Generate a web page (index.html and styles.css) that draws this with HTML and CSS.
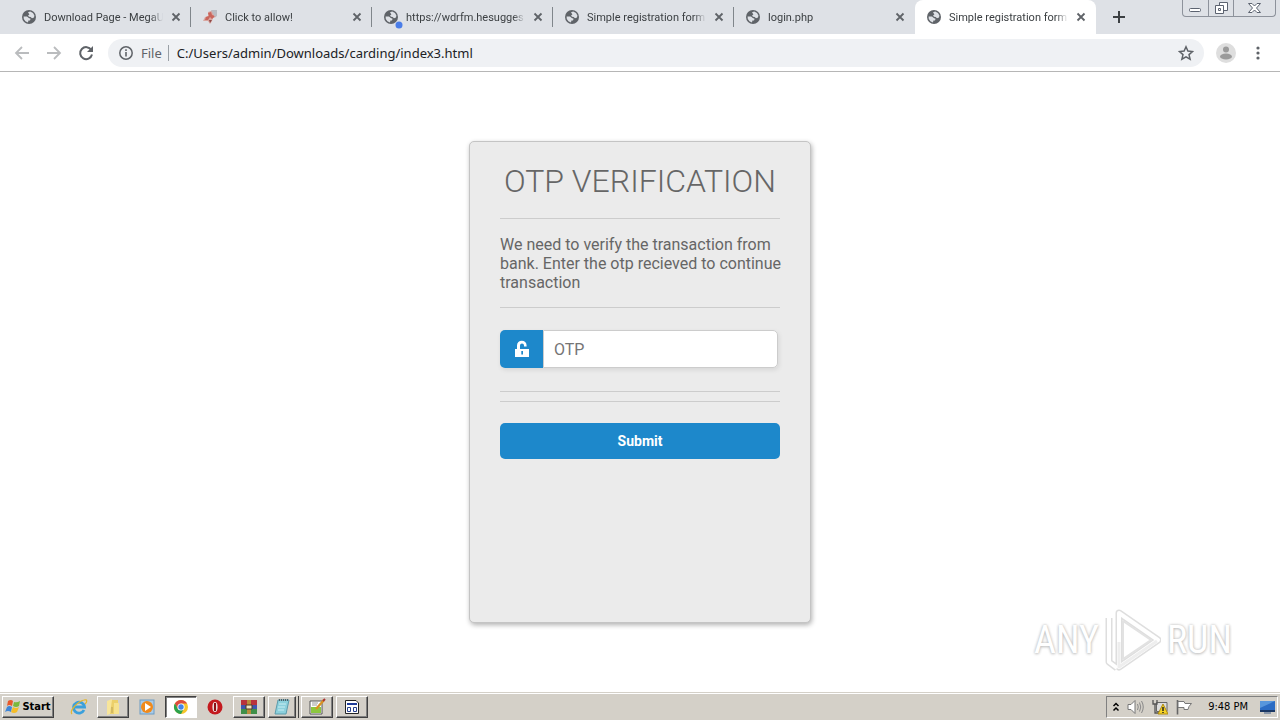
FILE: index.html
```html
<!DOCTYPE html>
<html lang="en">
<head>
    <meta charset="UTF-8">
    <meta name="viewport" content="width=device-width, initial-scale=1.0">
    <title>Simple registration form</title>
    <link rel="stylesheet" href="styles.css">
</head>
<body>

<!-- shared icons -->
<svg class="defs" aria-hidden="true">
    <symbol id="globe" viewBox="0 0 14 14">
        <circle cx="7" cy="7" r="7" fill="#5f6368"/>
        <path d="M6 2.200 8.200 1.600 11 3 12.400 5.600 12 7.600 10 8.200 8.600 7 7 6.800 6 5.400 7.400 4.600z" fill="#dee1e6"/>
        <path d="M1.600 6.400 5 6.600 6.800 8 8.600 8.800 8 10.400 6.400 10.600 6 12.400 3.400 11.200 1.800 9z" fill="#dee1e6"/>
    </symbol>
    <symbol id="cross" viewBox="0 0 10 10">
        <path d="M1.500 1.500 8.500 8.500M8.500 1.500 1.500 8.500" stroke="#5f6368" stroke-width="1.800"/>
    </symbol>
</svg>

<div class="tabs">
    <div class="tab">
        <svg class="favicon"><use href="#globe"/></svg>
        <span class="title">Download Page - MegaU</span>
        <button class="close" aria-label="Close tab"><svg><use href="#cross"/></svg></button>
    </div>
    <div class="tab">
        <svg class="favicon" viewBox="0 0 14 14">
            <path d="M5 2 11 0 14 1 13 7 10 8 9 11 7 14 5 11 0 11 2 7 5 6z" fill="#d9a6a0"/>
            <path d="M5 3 8 2 9 5 12 6 9 9 7 7 5 10 2 10 3 7 6 6z" fill="#c9655c"/>
            <path d="M8 0 14 0 14 6 12 7 10 4z" fill="#b9bcc3"/>
            <path d="M6 10 9 10 7 13z" fill="#8f4a48"/>
        </svg>
        <span class="title">Click to allow!</span>
        <button class="close" aria-label="Close tab"><svg><use href="#cross"/></svg></button>
    </div>
    <div class="tab">
        <svg class="favicon"><use href="#globe"/><circle cx="15" cy="15" r="3.500" fill="#4a7de8"/></svg>
        <span class="title">https://wdrfm.hesugges</span>
        <button class="close" aria-label="Close tab"><svg><use href="#cross"/></svg></button>
    </div>
    <div class="tab">
        <svg class="favicon"><use href="#globe"/></svg>
        <span class="title">Simple registration form</span>
        <button class="close" aria-label="Close tab"><svg><use href="#cross"/></svg></button>
    </div>
    <div class="tab last">
        <svg class="favicon"><use href="#globe"/></svg>
        <span class="title">login.php</span>
        <button class="close" aria-label="Close tab"><svg><use href="#cross"/></svg></button>
    </div>
    <div class="tab active">
        <svg class="favicon"><use href="#globe"/></svg>
        <span class="title">Simple registration form</span>
        <button class="close" aria-label="Close tab"><svg><use href="#cross"/></svg></button>
    </div>
    <button class="new-tab" aria-label="New tab">
        <svg width="12" height="12" viewBox="0 0 12 12"><path d="M6 0V12M0 6H12" stroke="#3c4043" stroke-width="2"/></svg>
    </button>
    <div class="window-buttons">
        <button aria-label="Minimize"><svg width="13" height="16" viewBox="0 0 13 16"><rect x=".5" y="8.500" width="11" height="3" rx="1" fill="#fff" stroke="#5c6370"/></svg></button>
        <button aria-label="Restore"><svg width="13" height="16" viewBox="0 0 13 16"><path d="M4.500 2.500H12.500V10.500H4.500z" fill="#fff" stroke="#5c6370"/><path d="M.5 5.500H8.500V13.500H.5z" fill="#fff" stroke="#5c6370"/><path d="M3.500 8.500H5.500V10.500H3.500z" fill="none" stroke="#5c6370"/></svg></button>
        <button class="wide" aria-label="Close"><svg width="13" height="16" viewBox="0 0 13 16"><path d="M.5 3.500H4L6.500 6 9 3.500H12.500L8.500 8 12.500 12.500H9L6.500 10 4 12.500H.5L4.500 8z" fill="#fff" stroke="#5c6370"/></svg></button>
    </div>
</div>

<div class="toolbar">
    <button aria-label="Back"><svg width="16" height="16" viewBox="0 0 16 16"><path d="M15 8H2M8 2 2 8 8 14" fill="none" stroke="#babcbe" stroke-width="1.800"/></svg></button>
    <button aria-label="Forward"><svg width="16" height="16" viewBox="0 0 16 16"><path d="M1 8H14M8 2 14 8 8 14" fill="none" stroke="#babcbe" stroke-width="1.800"/></svg></button>
    <button aria-label="Reload"><svg width="16" height="16" viewBox="0 0 16 16"><path d="M13.300 5A6 6 0 1 0 14 9.500" fill="none" stroke="#5f6368" stroke-width="2"/><path d="M15 1V7H9z" fill="#5f6368"/></svg></button>
    <div class="address">
        <svg width="14" height="14" viewBox="0 0 14 14"><circle cx="7" cy="7" r="6.200" fill="none" stroke="#5f6368" stroke-width="1.500"/><path d="M7 6V10.500M7 3.300V4.900" stroke="#5f6368" stroke-width="1.600"/></svg>
        <label for="url">File</label>
        <input type="text" id="url" value="C:/Users/admin/Downloads/carding/index3.html">
        <button aria-label="Bookmark"><svg width="16" height="16" viewBox="0 0 16 16"><path d="M8 1.800 9.900 6.100 14.500 6.500 11 9.600 12.100 14.200 8 11.800 3.900 14.200 5 9.600 1.500 6.500 6.100 6.100z" fill="none" stroke="#5f6368" stroke-width="1.500"/></svg></button>
    </div>
    <button class="profile" aria-label="Profile"><svg width="20" height="20" viewBox="0 0 20 20"><circle cx="10" cy="10" r="10" fill="#dedede"/><circle cx="10" cy="6.500" r="3" fill="#9a9a9a"/><ellipse cx="10" cy="13.500" rx="6" ry="3" fill="#9a9a9a"/></svg></button>
    <button class="menu" aria-label="Menu"><svg width="4" height="16" viewBox="0 0 4 16"><g fill="#5f6368"><circle cx="2" cy="3" r="1.600"/><circle cx="2" cy="8" r="1.600"/><circle cx="2" cy="13" r="1.600"/></g></svg></button>
</div>

<main>
    <form class="card">
        <h1>OTP VERIFICATION</h1>
        <hr>
        <p>We need to verify the transaction from bank. Enter the otp recieved to continue transaction</p>
        <hr>
        <div class="field">
            <label for="otp" aria-label="OTP">
                <svg width="16" height="18" viewBox="0 0 16 18"><path d="M1 9H3V5.500A4.300 4.300 0 0 1 12.600 5.500V6.500H10V5.500A1.900 1.900 0 0 0 6 5.500V9H15V17H1z" fill="#fff"/><path d="M7.300 11H9V14.500H7.300z" fill="#1d88cb"/></svg>
            </label>
            <input type="text" id="otp" placeholder="OTP">
        </div>
        <hr>
        <hr class="second">
        <button type="button" class="submit">Submit</button>
    </form>

    <div class="watermark">
        <span>ANY</span>
        <svg width="56" height="64" viewBox="0 0 56 64">
            <g fill="none" stroke-linejoin="round">
                <path d="M14 5 53 32 14 59zM4 10V54L12 60" stroke="#dedede" stroke-width="7"/>
                <path d="M14 5 53 32 14 59zM4 10V54L12 60" stroke="#fff" stroke-width="4"/>
                <path d="M18 13V51L46 32z" stroke="#e2e2e2" stroke-width="2"/>
                <path d="M14 34V59L52 33" stroke="#eee" stroke-width="3"/>
            </g>
        </svg>
        <span>RUN</span>
    </div>
</main>

<div class="taskbar">
    <button class="task start">
        <svg width="17" height="16" viewBox="0 0 17 16"><path d="M3 2Q6 0 8 2L7 7Q4 5 2 7z" fill="#e8592b"/><path d="M9 3Q12 4 15 2L14 7Q11 9 8 7z" fill="#7ab83c"/><path d="M2 8Q4 6 7 8L6 13Q3 11 0 13z" fill="#3f86d8"/><path d="M8 8Q11 10 14 8L12 13Q9 15 6 13z" fill="#f5bd27"/></svg>
        Start
    </button>
    <button class="quick" aria-label="Internet Explorer">
        <svg width="18" height="18" viewBox="0 0 18 18"><path d="M14 12A5.500 5.500 0 1 1 14.500 9H5" fill="none" stroke="#3ba0dc" stroke-width="2.800"/><path d="M2 16C-1 13 8 3 14 2 18 1 17 4 15 6" fill="none" stroke="#e3b62f" stroke-width="1.200"/></svg>
    </button>
    <button class="task" aria-label="Explorer">
        <svg width="16" height="18" viewBox="0 0 16 18"><path d="M2 3 7 1V15L2 17z" fill="#f7e59a"/><path d="M7 2H13V16H5z" fill="#ecd06a"/><path d="M9 5H14V16H9z" fill="#f6e28f"/><path d="M7 9V15" stroke="#b8a25a"/></svg>
    </button>
    <button class="quick" aria-label="Media Player">
        <svg width="16" height="16" viewBox="0 0 16 16"><rect x="1" y="1" width="14" height="14" fill="#a9cbe8" stroke="#6d9cc4"/><circle cx="8" cy="8" r="6" fill="#f08a1c"/><path d="M6 4 12 8 6 12z" fill="#fff"/></svg>
    </button>
    <button class="task pressed" aria-label="Chrome">
        <svg width="16" height="16" viewBox="0 0 16 16"><circle cx="8" cy="8" r="7" fill="#f6c52b"/><path d="M1.900 4.500A7 7 0 0 1 14.100 4.500H8L5 10z" fill="#dd4b3e"/><path d="M1.900 4.500A7 7 0 0 0 8 15L11 9.500 5 10z" fill="#2ba24c"/><circle cx="8" cy="8" r="3.600" fill="#fff"/><circle cx="8" cy="8" r="2.700" fill="#4284e8"/></svg>
    </button>
    <button class="quick" aria-label="Opera">
        <svg width="16" height="16" viewBox="0 0 16 16"><circle cx="8" cy="8" r="7.500" fill="#c41a1f"/><ellipse cx="8" cy="8" rx="2.600" ry="5" fill="#e9dedd"/><path d="M8 4V12" stroke="#8d1015" stroke-width="2"/></svg>
    </button>
    <button class="task" aria-label="WinRAR">
        <svg width="18" height="16" viewBox="0 0 18 16"><path d="M1 1H17V6H1z" fill="#b8323c"/><path d="M1 6H17V10H1z" fill="#3f56ad"/><path d="M1 10H17V15H1z" fill="#3f8f48"/><path d="M7 1H11V15H7z" fill="#b98d3c"/><path d="M6 6H12V10H6z" fill="#f0e3c1" stroke="#4e3920"/></svg>
    </button>
    <button class="task stacked" aria-label="Notepad">
        <svg width="16" height="18" viewBox="0 0 16 18"><path d="M4 2H15L12 16H1z" fill="#8cd0dc" stroke="#5d9cac"/><path d="M5 6H12M4 9H11M4 12H10" stroke="#c9eef3"/><path d="M5 2H14" stroke="#4d6068" stroke-width="2" stroke-dasharray="1 1"/></svg>
    </button>
    <button class="task" aria-label="Notepad++">
        <svg width="18" height="18" viewBox="0 0 18 18"><path d="M2 3H14V16H2z" fill="#fff" stroke="#555"/><path d="M3 9H13V15H3z" fill="#8cc63e"/><path d="M4 5H10M4 7H9" stroke="#9a9a9a"/><path d="M8 11 16 2" stroke="#d99222" stroke-width="2.400"/><path d="M15 3 17 1" stroke="#a33" stroke-width="2"/></svg>
    </button>
    <button class="task" aria-label="Program">
        <svg width="14" height="16" viewBox="0 0 14 16"><path d="M.5 1.500H11L13.500 4V14.500H.5z" fill="#fff" stroke="#222"/><path d="M2 4H12V6H2z" fill="#1e3c9a"/><path d="M2.500 8.500H5.500V12.500H2.500zM8.500 8.500H11.500V12.500H8.500z" fill="none" stroke="#27408c"/></svg>
    </button>
    <div class="tray">
        <svg width="8" height="12" viewBox="0 0 8 12"><path d="M1.500 5 4 2.500 6.500 5M1.500 9.500 4 7 6.500 9.500" fill="none" stroke="#000" stroke-width="1.500"/></svg>
        <svg width="18" height="16" viewBox="0 0 18 16"><path d="M1 5.500H4L8 1.500V14.500L4 10.500H1z" fill="#fff" stroke="#777"/><path d="M10.500 5Q12 8 10.500 11M12.500 3.500Q15 8 12.500 12.500M14.500 2Q18 8 14.500 14" fill="none" stroke="#888"/></svg>
        <svg width="16" height="16" viewBox="0 0 16 16"><path d="M4.500 3.500H15V12.500H4.500z" fill="#ddd" stroke="#666"/><path d="M1 1V5H5V1M3 5V14H7" fill="none" stroke="#555" stroke-width="1.300"/><path d="M11 5 16 15H6z" fill="#f5d427" stroke="#b08b10"/><path d="M11 8V12M11 13V14" stroke="#222" stroke-width="1.500"/></svg>
        <svg width="18" height="16" viewBox="0 0 18 16"><path d="M2.500 1V15.500" stroke="#666" stroke-width="1.600"/><path d="M3 2.500H9L10 4.500H16.500L14 7.500 13 10.500H9V8.500H3z" fill="#fff" stroke="#777"/></svg>
        <span class="clock">9:48 PM</span>
        <svg width="16" height="16" viewBox="0 0 16 16"><path d="M1 2H16V11H1z" fill="#2b6cc4"/><path d="M1 2H16L1 9z" fill="#5796dc"/><path d="M1 11H16V13H1z" fill="#1b3864"/><path d="M5 14H12" stroke="#8a97a8" stroke-width="2"/></svg>
    </div>
</div>

</body>
</html>
```
FILE: styles.css
```css
* {
    box-sizing: border-box;
}
body {
    margin: 0;
    min-height: 100vh;
    display: flex;
    flex-direction: column;
    font-family: Roboto, sans-serif;
    background-color: white;
}
button {
    padding: 0;
    border: none;
    background: none;
    font-family: inherit;
}
svg {
    display: block;
    flex: none;
}
.defs {
    position: absolute;
    width: 0;
    height: 0;
}

/* browser tabs */
.tabs {
    display: flex;
    height: 34px;
    padding-left: 10px;
    background-color: #dee1e6;
}
.tab {
    display: flex;
    align-items: center;
    gap: 8px;
    flex: 0 1 181px;
    min-width: 0;
    padding: 0 10px 0 12px;
    background: linear-gradient(#80868b, #80868b) right center / 1px 20px no-repeat;
    font-size: 11px;
    color: #3c4043;
}
.tab.last {
    background: none;
}
.tab.active {
    background: white;
    border-radius: 8px 8px 0 0;
}
.favicon {
    width: 14px;
    height: 14px;
    overflow: visible;
}
.favicon use {
    width: 14px;
    height: 14px;
}
.title {
    flex: 1;
    overflow: hidden;
    white-space: nowrap;
    -webkit-mask-image: linear-gradient(to right, #000 90%, transparent);
    mask-image: linear-gradient(to right, #000 90%, transparent);
}
.close svg {
    width: 10px;
    height: 10px;
}
.new-tab {
    padding: 0 17px;
}
.window-buttons {
    display: flex;
    height: 17px;
    margin-left: auto;
    margin-right: 4px;
    border: 1px solid #8d929b;
    border-top: none;
    border-radius: 0 0 4px 4px;
}
.window-buttons button {
    display: flex;
    justify-content: center;
    width: 25px;
}
.window-buttons button + button {
    border-left: 1px solid #8d929b;
}
.window-buttons .wide {
    width: 42px;
}

/* address bar */
.toolbar {
    display: flex;
    align-items: center;
    gap: 16px;
    height: 38px;
    padding: 0 20px 0 14px;
    border-bottom: 1px solid #b6b6b6;
}
.address {
    flex: 1;
    display: flex;
    align-items: center;
    gap: 8px;
    height: 28px;
    margin-left: -2px;
    padding: 0 10px 0 11px;
    border-radius: 14px;
    background-color: #eff1f4;
    font-family: "Noto Sans", sans-serif;
    font-size: 13px;
}
.address label {
    padding-right: 6px;
    border-right: 1px solid #9aa0a6;
    line-height: 16px;
    color: #5f6368;
}
.address input {
    flex: 1;
    min-width: 0;
    padding: 0;
    border: none;
    background: none;
    font: inherit;
    color: #202124;
}
.profile {
    margin: 0 4px 0 -4px;
}

/* OTP form */
main {
    flex: 1;
    position: relative;
    padding: 69px 0;
}
.card {
    width: 342px;
    min-height: 482px;
    margin: 0 auto;
    padding: 20px 30px;
    background-color: #ebebeb;
    border: 1px solid #c4c4c4;
    border-radius: 5px;
    box-shadow: 1px 2px 5px rgba(0, 0, 0, 0.31);
    color: #666;
}
h1 {
    margin: 0 0 18px;
    font-size: 32px;
    font-weight: 300;
    line-height: 38px;
    text-align: center;
    white-space: nowrap;
}
hr {
    margin: 0;
    border: none;
    border-top: 1px solid #ccc;
}
.second {
    margin-top: 9px;
}
.card p {
    margin: 16px -6px 15px 0;
    font-size: 16px;
    line-height: 19px;
}
.field {
    display: flex;
    margin: 22px 2px 23px 0;
    border-radius: 5px;
    box-shadow: 1px 2px 5px rgba(0, 0, 0, 0.09);
}
.field label {
    display: flex;
    align-items: center;
    justify-content: center;
    width: 43px;
    height: 38px;
    border-radius: 5px 0 0 5px;
    background-color: #1d88cb;
}
.field input {
    flex: 1;
    min-width: 0;
    padding: 0 10px;
    border: 1px solid #ccc;
    border-radius: 0 5px 5px 0;
    font-family: inherit;
    font-size: 16px;
}
.submit {
    width: 100%;
    height: 36px;
    margin-top: 21px;
    border-radius: 5px;
    background-color: #1d88cb;
    font-size: 14px;
    font-weight: bold;
    color: white;
}
.watermark {
    position: absolute;
    right: 48px;
    bottom: 20px;
    display: flex;
    align-items: center;
    gap: 6px;
    font-family: "Roboto Condensed", "Liberation Sans Narrow", "Liberation Sans", sans-serif;
    font-size: 38px;
    color: white;
    text-shadow: 0 0 3px #bbb, 0 1px 3px #ccc;
}

/* windows taskbar */
.taskbar {
    display: flex;
    align-items: center;
    gap: 3px;
    height: 28px;
    padding: 0 2px;
    border-top: 1px solid #d4d0c8;
    background-color: #d4d0c8;
    box-shadow: inset 0 1px #fff;
    font-family: "DejaVu Sans Condensed", "DejaVu Sans", sans-serif;
    font-size: 11px;
}
.task {
    display: flex;
    align-items: center;
    justify-content: center;
    width: 32px;
    height: 22px;
    border: 1px solid;
    border-color: #fff #404040 #404040 #fff;
    box-shadow: inset -1px -1px #808080;
}
.start {
    width: 52px;
    margin-right: 7px;
    font-size: 11px;
    font-weight: bold;
}
.pressed {
    border-color: #404040 #fff #fff #404040;
    background-color: #fff;
    box-shadow: inset 1px 1px #808080;
}
.stacked {
    width: 28px;
    margin-right: 2px;
    box-shadow: inset -1px -1px #808080, 2px 0 #d4d0c8, 3px 0 #404040;
}
.quick {
    display: flex;
    align-items: center;
    justify-content: center;
    width: 30px;
    height: 22px;
}
.tray {
    display: flex;
    align-items: center;
    gap: 7px;
    height: 22px;
    margin-left: auto;
    padding: 0 2px 0 5px;
    border: 1px solid;
    border-color: #808080 #fff #fff #808080;
}
.clock {
    padding: 0 4px 0 8px;
}
```
